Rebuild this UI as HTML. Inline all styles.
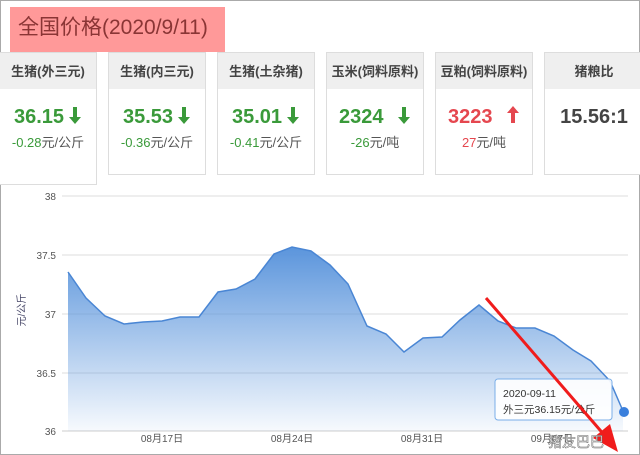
<!DOCTYPE html><html><head><meta charset="utf-8"><style>
body{margin:0;width:640px;height:455px;overflow:hidden;background:#fff;font-family:"Liberation Sans","Noto Sans CJK SC",sans-serif;position:relative}
.frame{position:absolute;left:0;top:0;width:638px;height:453px;border:1px solid #aaa}
.title{position:absolute;left:10px;top:7px;width:215px;height:45px;background:#f99;color:#8a3535;font-size:21px;line-height:42px;padding-left:8px;box-sizing:border-box}
.card{position:absolute;top:52px;width:98px;height:123px;border:1px solid #ddd;box-sizing:border-box;background:#fff}
.card .h{height:36px;background:#efefef;font-size:13px;font-weight:bold;color:#444;text-align:center;line-height:38px;white-space:nowrap}
.card .v{font-size:20px;font-weight:bold;text-align:center;margin-top:17px}
.card .c{font-size:13px;text-align:center;color:#555;margin-top:3px}
.g{color:#3a9a3a}.r{color:#e5474f}
.a{display:inline-block;vertical-align:-1px;margin-left:4px}
</style></head><body>
<div class="frame"></div>
<div class="title">全国价格(2020/9/11)</div>
<div class="card" style="left:-1px;height:133px"><div class="h">生猪(外三元)</div><div class="v g">36.15<svg class="a" width="14" height="18"><path d="M5,1h4v10h4l-6,7l-6,-7h4z" fill="#3a9a3a"/></svg></div><div class="c"><span class="g">-0.28</span>元/公斤</div></div>
<div class="card" style="left:108px"><div class="h">生猪(内三元)</div><div class="v g">35.53<svg class="a" width="14" height="18"><path d="M5,1h4v10h4l-6,7l-6,-7h4z" fill="#3a9a3a"/></svg></div><div class="c"><span class="g">-0.36</span>元/公斤</div></div>
<div class="card" style="left:217px"><div class="h">生猪(土杂猪)</div><div class="v g">35.01<svg class="a" width="14" height="18"><path d="M5,1h4v10h4l-6,7l-6,-7h4z" fill="#3a9a3a"/></svg></div><div class="c"><span class="g">-0.41</span>元/公斤</div></div>
<div class="card" style="left:326px"><div class="h">玉米(饲料原料)</div><div class="v g">2324 <svg class="a" width="14" height="18" style="margin-left:8px"><path d="M5,1h4v10h4l-6,7l-6,-7h4z" fill="#3a9a3a"/></svg></div><div class="c"><span class="g">-26</span>元/吨</div></div>
<div class="card" style="left:435px"><div class="h">豆粕(饲料原料)</div><div class="v r">3223 <svg class="a" width="14" height="18" style="margin-left:8px"><path d="M5,17h4v-10h4l-6,-7l-6,7h4z" fill="#e5474f"/></svg></div><div class="c"><span class="r">27</span>元/吨</div></div>
<div class="card" style="left:544px;width:100px"><div class="h">猪粮比</div><div class="v" style="color:#444">15.56:1</div></div>
<svg style="position:absolute;left:0;top:0" width="640" height="455">
<defs><linearGradient id="gr" x1="0" y1="0" x2="0" y2="1"><stop offset="0" stop-color="#5b95dc"/><stop offset="1" stop-color="#5b95dc" stop-opacity="0.05"/></linearGradient></defs>
<g stroke="#ddd" stroke-width="1"><line x1="62" y1="196" x2="628" y2="196"/><line x1="62" y1="255" x2="628" y2="255"/><line x1="62" y1="314" x2="628" y2="314"/><line x1="62" y1="373" x2="628" y2="373"/><line x1="62" y1="431" x2="628" y2="431" stroke="#ccc"/></g>
<g font-size="10" fill="#555" text-anchor="end"><text x="56" y="200">38</text><text x="56" y="259">37.5</text><text x="56" y="318">37</text><text x="56" y="377">36.5</text><text x="56" y="435">36</text></g>
<text x="25" y="310" font-size="10" fill="#446" transform="rotate(-90 25 310)" text-anchor="middle">元/公斤</text>
<g font-size="10" fill="#555" text-anchor="middle"><text x="162" y="442">08月17日</text><text x="292" y="442">08月24日</text><text x="422" y="442">08月31日</text><text x="552" y="442">09月07日</text></g>
<path d="M68,272 L86,298 105,316 124,324 143,322 162,321 180,317 199,317 218,292 236,289 255,279 274,254 292,247 311,251 330,265 348,284 367,326 386,334 404,352 423,338 442,337 460,320 479,305 498,321 516,328 535,328 554,336 573,350 591,361 610,381 623,411 L623,431 L68,431Z" fill="url(#gr)"/>
<path d="M68,272 L86,298 105,316 124,324 143,322 162,321 180,317 199,317 218,292 236,289 255,279 274,254 292,247 311,251 330,265 348,284 367,326 386,334 404,352 423,338 442,337 460,320 479,305 498,321 516,328 535,328 554,336 573,350 591,361 610,381 623,411" fill="none" stroke="#4a86d4" stroke-width="1.5"/>
<circle cx="624" cy="412" r="5" fill="#3a7fdc"/>
<rect x="495" y="379" width="117" height="41" rx="3" fill="#fff" fill-opacity="0.9" stroke="#7aaee8"/>
<text x="503" y="397" font-size="10.5" fill="#333">2020-09-11</text>
<text x="503" y="413" font-size="10.5" fill="#333">外三元36.15元/公斤</text>
<line x1="486" y1="298" x2="606" y2="437" stroke="#f01c1c" stroke-width="3"/>
<polygon points="618,452 593,438 610,424" fill="#f01c1c"/>
<text x="548" y="447" font-size="14" fill="#fff" stroke="#666" stroke-width="0.5">猪友巴巴</text>
</svg>
</body></html>
